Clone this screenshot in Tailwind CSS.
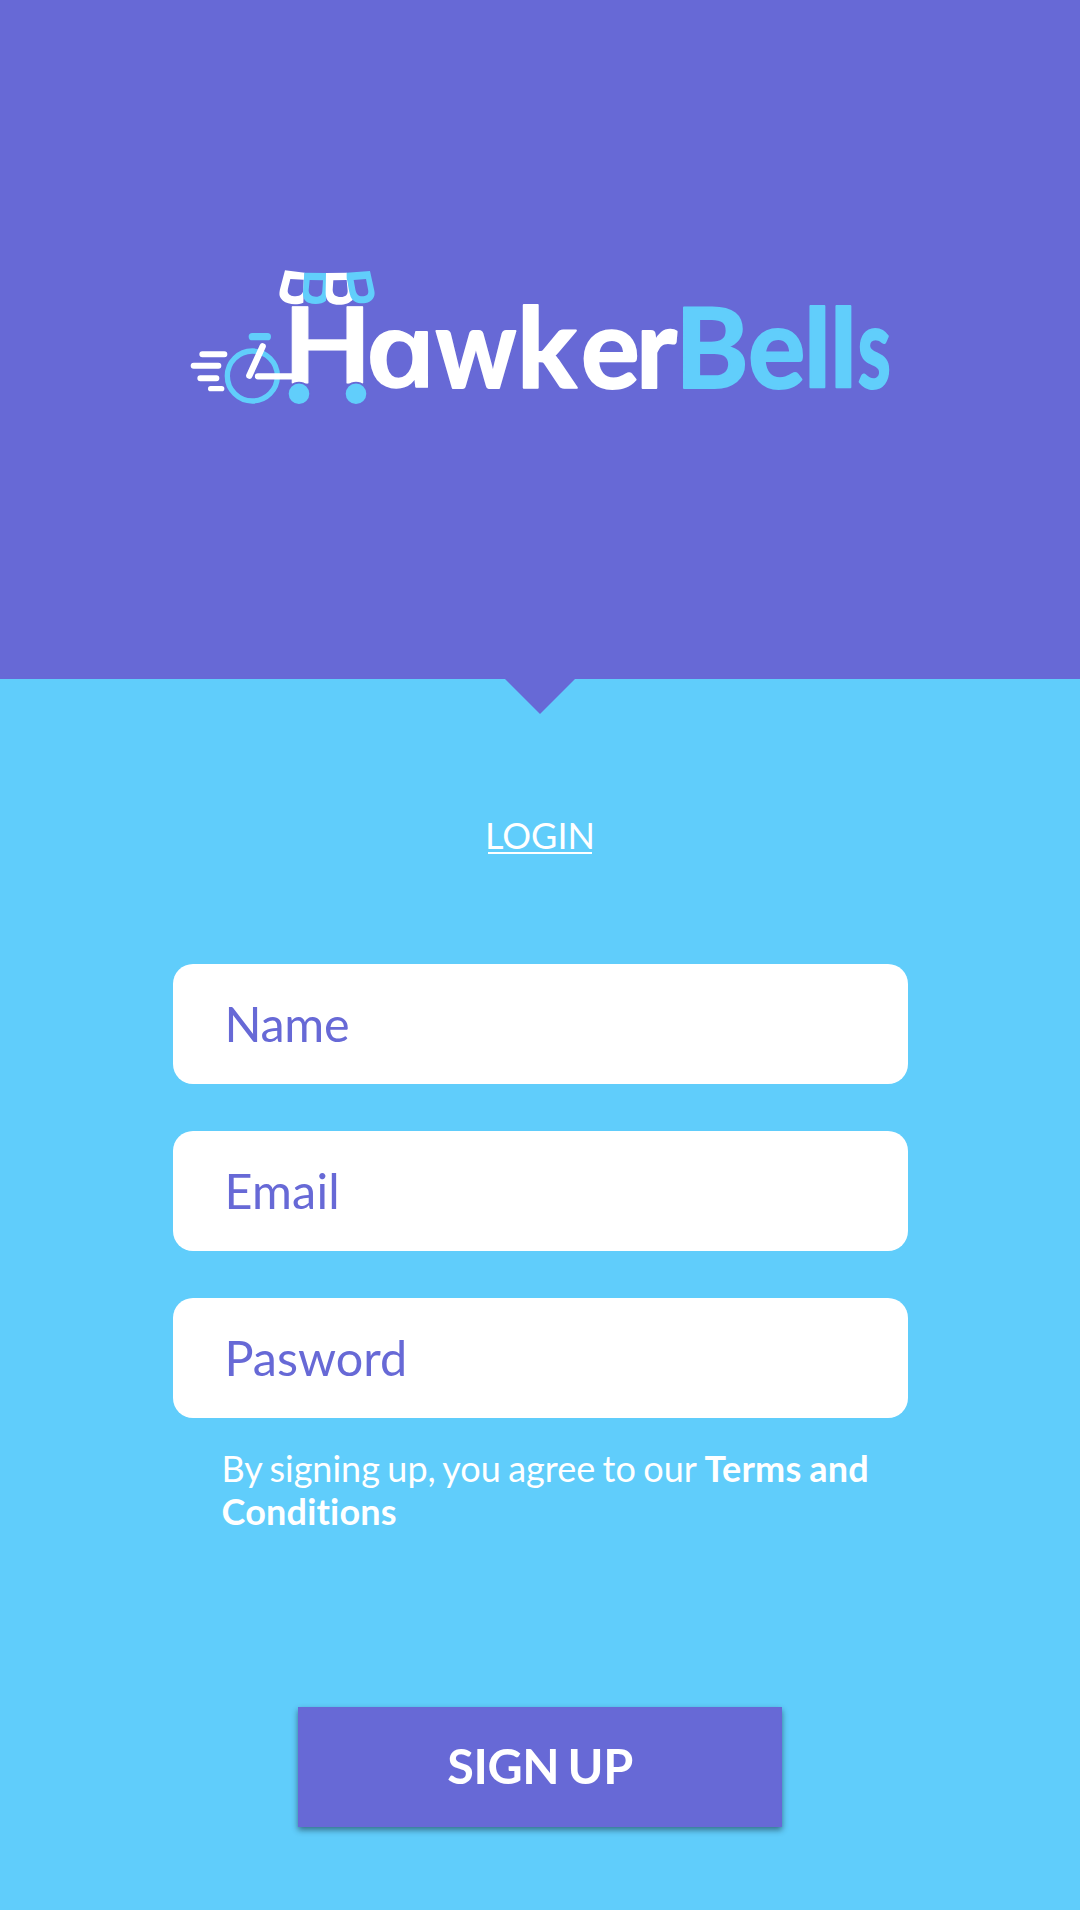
<!DOCTYPE html>
<html lang="en">
<head>
<meta charset="utf-8">
<title>HawkerBells – Sign up</title>
<script src="https://cdn.jsdelivr.net/npm/@tailwindcss/browser@4"></script>
</head>
<body class="min-h-[1910px] bg-[#60cdfb] font-['Lato',sans-serif] text-white">
<div class="flex h-[1910px] w-[1080px] flex-col items-center overflow-hidden">
  <header class="flex h-[679px] w-full shrink-0 justify-center bg-[#6769d6] pt-[260px]">
    <svg class="h-[150px] w-[720px] overflow-visible" viewBox="0 0 720 150" role="img" aria-label="HawkerBells">
      <!-- awning, bicycle and wheels -->
      <g transform="scale(.33333)">
        <g fill-rule="evenodd">
          <path fill="#fff" d="M315 31L374 38L370 128C350 136 322 133 309 122C297 112 297 103 300 88ZM331 57C328 72 323 84 323 94C324 105 334 109 347 109C362 108 368 103 370 91L371 59Z"/>
          <path fill="#61cefb" d="M373 38L440 39L438 122C426 132 405 135 385 128C373 123 368 112 369 95ZM389 60L386 91C386 104 395 110 408 110C421 110 427 103 427 92L429 61Z"/>
          <path fill="#fff" d="M438 39L501 38L520 117C506 134 482 138 459 132C443 127 437 115 437 98ZM460 61L458 90C459 105 468 111 482 111C497 111 503 104 503 93L500 60Z"/>
          <path fill="#61cefb" d="M500 38L570 33L583 92C587 111 576 125 557 129C536 132 519 126 512 110C505 92 505 72 500 55ZM521 60L526 88C529 105 537 110 550 109C563 108 567 101 564 88L558 57Z"/>
        </g>
        <circle cx="217" cy="348" r="75" fill="none" stroke="#61cefb" stroke-width="16"/>
        <path d="M217 230H262" stroke="#61cefb" stroke-width="22" stroke-linecap="round"/>
        <g stroke="#fff" stroke-linecap="round" fill="none">
          <path stroke-width="19" d="M248 259L208 347M234 349H340"/>
          <path stroke-width="18" d="M67 283H133M41 317H115M61 355H109"/>
          <path stroke-width="16" d="M92 386H125"/>
        </g>
      </g>
      <g class="font-['Lato',sans-serif] font-bold" font-size="112" stroke-linejoin="round">
        <g fill="#fff" stroke="#fff" stroke-width="2">
          <text stroke-width="1" transform="translate(103 123) scale(1.03 .94)">H</text>
          <text class="font-['Open_Sans',sans-serif] font-semibold italic" font-size="102" stroke-width="1.5" transform="translate(191.5 127) scale(1.22 1) skewX(12)">a</text>
          <text transform="translate(255.5 127.5) scale(.9 1)">w</text>
          <text transform="translate(337 127.5)">k</text>
          <text transform="translate(401 127.5) scale(.98 1)">e</text>
          <text transform="translate(456 127.5) scale(.98 1)">r</text>
        </g>
        <g fill="#61cefb" stroke="#61cefb" stroke-width="2">
          <text transform="translate(495 127.5)">B</text>
          <text transform="translate(568 127.5) scale(.96 1)">e</text>
          <text transform="translate(623.5 127) scale(1 .97)">l</text>
          <text transform="translate(649.5 127) scale(1 .97)">l</text>
          <text transform="translate(677.5 127.5) scale(.68 1)">s</text>
        </g>
      </g>
      <g fill="#61cefb" stroke="#6769d6" stroke-width="1.6">
        <circle cx="119" cy="133.7" r="11.1"/>
        <circle cx="176" cy="133.7" r="11.1"/>
      </g>
    </svg>
  </header>
  <svg class="-mt-px h-9 w-[72px] shrink-0" viewBox="0 0 72 36"><path fill="#6769d6" d="M.5 0H71.5V.5L36 36L.5 .5Z"/></svg>
  <a class="mt-[100px] h-10 border-b-2 border-white text-[36px] leading-[43px]"><span class="-mx-[3px]">LOGIN</span></a>
  <form class="mt-[110px] flex w-[735px] flex-col [font-variant-ligatures:none]">
    <div class="flex flex-col gap-[47px] text-[48.5px] text-[#6769d6]">
      <label class="flex h-[120px] items-center rounded-[20px] bg-white pb-0.5 pl-[52px] tracking-[-0.3px]">Name</label>
      <label class="flex h-[120px] items-center rounded-[20px] bg-white pb-0.5 pl-[52px] tracking-[0.2px]">Email</label>
      <label class="flex h-[120px] items-center rounded-[20px] bg-white pb-0.5 pl-[52px]">Pasword</label>
    </div>
    <p class="mt-[29px] pl-[49px] text-[36px] leading-[43px] whitespace-nowrap [word-spacing:-1.8px]">By signing up, you agree to our <b class="font-bold tracking-[0.2px] [word-spacing:-1px]"><span class="ml-[1px]">Terms</span> and<br>Conditions</b></p>
    <button type="button" class="mt-[174px] h-[120px] w-[484px] self-center bg-[#6769d6] pb-[3px] text-[48.5px] font-bold tracking-[-0.4px] [word-spacing:-3px] shadow-[0_3px_6px_rgba(0,0,0,0.45)]">SIGN UP</button>
  </form>
</div>
</body>
</html>
